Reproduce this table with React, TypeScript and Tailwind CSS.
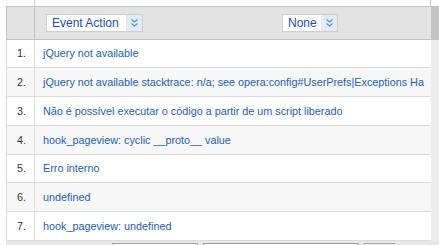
import React from "react";

const rows: { n: number; text: string; h: string; alt: boolean }[] = [
  { n: 1, text: "jQuery not available", h: "h-[28px]", alt: false },
  {
    n: 2,
    text: "jQuery not available stacktrace: n/a; see opera:config#UserPrefs|Exceptions Ha",
    h: "h-[29px]",
    alt: true,
  },
  { n: 3, text: "Não é possível executar o código a partir de um script liberado", h: "h-[29px]", alt: false },
  { n: 4, text: "hook_pageview: cyclic __proto__ value", h: "h-[29px]", alt: true },
  { n: 5, text: "Erro interno", h: "h-[28px]", alt: false },
  { n: 6, text: "undefined", h: "h-[29px]", alt: true },
  { n: 7, text: "hook_pageview: undefined", h: "h-[29px]", alt: false },
];

function Chevrons() {
  return (
    <svg width="9" height="10" viewBox="0 0 9 10" fill="none">
      <polyline points="1.5,1.5 4.5,4 7.5,1.5" stroke="#5a88d6" strokeWidth="1.1" />
      <polyline points="1.5,5.5 4.5,8 7.5,5.5" stroke="#5a88d6" strokeWidth="1.1" />
    </svg>
  );
}

function Select({ label, textW }: { label: string; textW: string }) {
  return (
    <div className="flex h-[18px] items-stretch border border-[#cfcfcf] bg-white">
      <span className={`flex items-center pl-[5px] ${textW} text-[12px] leading-none text-[#1f4bb0]`}>{label}</span>
      <span className="flex w-[16px] items-center justify-center bg-[#e1ebf6]">
        <Chevrons />
      </span>
    </div>
  );
}

export default function App() {
  return (
    <div className="relative h-[245px] w-[439px] overflow-hidden bg-white font-['Liberation_Sans',Arial,sans-serif]">
      {/* top strip */}
      <div className="flex h-[6px]">
        <div className="w-[35px] border-r border-[#cfcfcf]" />
        <div className="w-[396px] border-r border-[#cfcfcf]" />
        <div className="flex-1" />
      </div>

      <div className="flex pl-[6px]">
        <div className="w-[425px]">
          {/* header */}
          <div className="flex h-[34px] border-y border-l border-[#c2c2c2] bg-[#e3e3e3]">
            <div className="w-[28px] border-r border-[#c2c2c2]" />
            <div className="flex flex-1 items-center pl-[11px]">
              <Select label="Event Action" textW="w-[79px]" />
              <div className="ml-[139px]">
                <Select label="None" textW="w-[38px]" />
              </div>
            </div>
          </div>
          {/* rows */}
          {rows.map((r) => (
            <div
              key={r.n}
              className={`flex ${r.h} border-b border-l border-[#dcdcdc] ${r.alt ? "bg-[#f7f7f7]" : "bg-white"}`}
            >
              <div className="flex w-[28px] items-center justify-end border-r border-[#dcdcdc] pr-[8px] text-[10.8px] text-[#333333]">
                {r.n}.
              </div>
              <div className="flex min-w-0 flex-1 items-center pl-[8px]">
                <span className="whitespace-nowrap text-[10.8px] text-[#2460b5]">{r.text}</span>
              </div>
            </div>
          ))}
        </div>
        {/* right strip */}
        <div className="flex w-[8px] flex-col">
          <div className="h-[34px] bg-[#c4c4c4]" />
          <div className="flex-1 bg-[#ededed]" />
        </div>
      </div>

      {/* footer */}
      <div className="ml-[6px] flex h-[20px] bg-[#e8e8e8] pt-[2px]">
        <div className="ml-[106px] h-[18px] w-[86px] border border-[#9aa6b4] bg-white" />
        <div className="ml-[5px] h-[18px] w-[156px] border border-[#8fa3bd] bg-white" />
        <div className="ml-[5px] h-[18px] w-[31px] border border-[#a8a8a8] bg-[#f4f4f4]" />
      </div>
    </div>
  );
}
